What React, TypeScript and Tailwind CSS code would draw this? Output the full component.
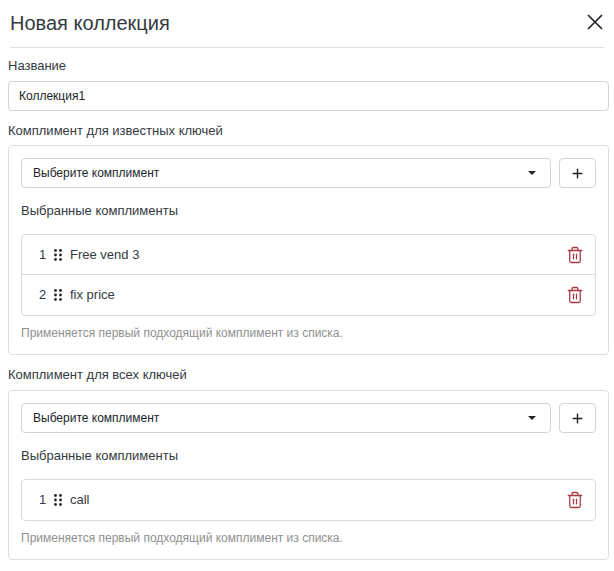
import { Plus, Trash2 } from 'lucide-react'

type Compliment = {
  id: string
  name: string
}

const knownKeys: Compliment[] = [
  { id: 'free-vend', name: 'Free vend 3' },
  { id: 'fix-price', name: 'fix price' },
]

const allKeys: Compliment[] = [{ id: 'call', name: 'call' }]

function GripIcon() {
  return (
    <svg width="8" height="12" viewBox="0 0 8 12" className="shrink-0 fill-[#212529]">
      <circle cx="1.5" cy="1.5" r="1.4" />
      <circle cx="6.5" cy="1.5" r="1.4" />
      <circle cx="1.5" cy="6" r="1.4" />
      <circle cx="6.5" cy="6" r="1.4" />
      <circle cx="1.5" cy="10.5" r="1.4" />
      <circle cx="6.5" cy="10.5" r="1.4" />
    </svg>
  )
}

function CloseIcon() {
  return (
    <svg width="16" height="16" viewBox="0 0 16 16" className="mr-[1px] mb-[1px] shrink-0 stroke-[#212529]" strokeWidth="1.7" fill="none">
      <path d="M1 1l14 14M15 1L1 15" />
    </svg>
  )
}

function ComplimentCard({ items }: { items: Compliment[] }) {
  return (
    <div className="rounded border border-[#dcdfe2] px-3 pt-3 pb-[12px]">
      <div className="flex gap-2">
        <div className="flex h-[30px] flex-1 items-center justify-between rounded border border-[#ced4da] pr-[14px] pl-[11px] text-[12px] text-[#212529]">
          <span>Выберите комплимент</span>
          <span className="h-0 w-0 border-x-[4px] border-t-[4px] border-x-transparent border-t-[#212529]" />
        </div>
        <button
          type="button"
          className="flex h-[30px] w-[37px] items-center justify-center rounded border border-[#ced4da] text-[#212529]"
        >
          <Plus size={15} strokeWidth={2.3} />
        </button>
      </div>
      <div className="mt-[14px] text-[13px] leading-[18px] text-[#343a40]">Выбранные комплименты</div>
      <div className="mt-[14px] overflow-hidden rounded border border-[#d9dcdf]">
        {items.map((item, index) => (
          <div
            key={item.id}
            className="flex h-[40px] items-center border-b border-[#d9dcdf] pr-[11px] pl-[16px] text-[13px] text-[#343a40] last:border-b-0"
          >
            <span className="w-[9px] text-center">{index + 1}</span>
            <span className="ml-[7px]">
              <GripIcon />
            </span>
            <span className="ml-[8px] flex-1">{item.name}</span>
            <Trash2 size={18} strokeWidth={1.7} className="text-[#a83b42]" />
          </div>
        ))}
      </div>
      <div className="mt-[8px] text-[12px] leading-[18px] text-[#8f8f8f]">
        Применяется первый подходящий комплимент из списка.
      </div>
    </div>
  )
}

export default function App() {
  return (
    <div className="h-[571px] w-[614px] overflow-hidden bg-white font-['Liberation_Sans',sans-serif]">
      <div className="mx-[10px] flex h-[48px] items-center justify-between border-b border-[#dcdfe2] pb-[2px]">
        <h1 className="text-[20px] leading-[28px] font-normal text-[#343a40]">Новая коллекция</h1>
        <CloseIcon />
      </div>
      <div className="px-[8px] pt-[9px] pr-[5px]">
        <label className="block text-[13px] leading-[18px] text-[#343a40]">Название</label>
        <div className="mt-[6px] flex h-[30px] items-center rounded border border-[#ced4da] px-[10px] text-[12px] text-[#212529]">
          Коллекция1
        </div>
        <label className="mt-[11px] mb-[5px] block text-[13px] leading-[18px] text-[#343a40]">
          Комплимент для известных ключей
        </label>
        <ComplimentCard items={knownKeys} />
        <label className="mt-[11px] mb-[6px] block text-[13px] leading-[18px] text-[#343a40]">
          Комплимент для всех ключей
        </label>
        <ComplimentCard items={allKeys} />
      </div>
    </div>
  )
}
